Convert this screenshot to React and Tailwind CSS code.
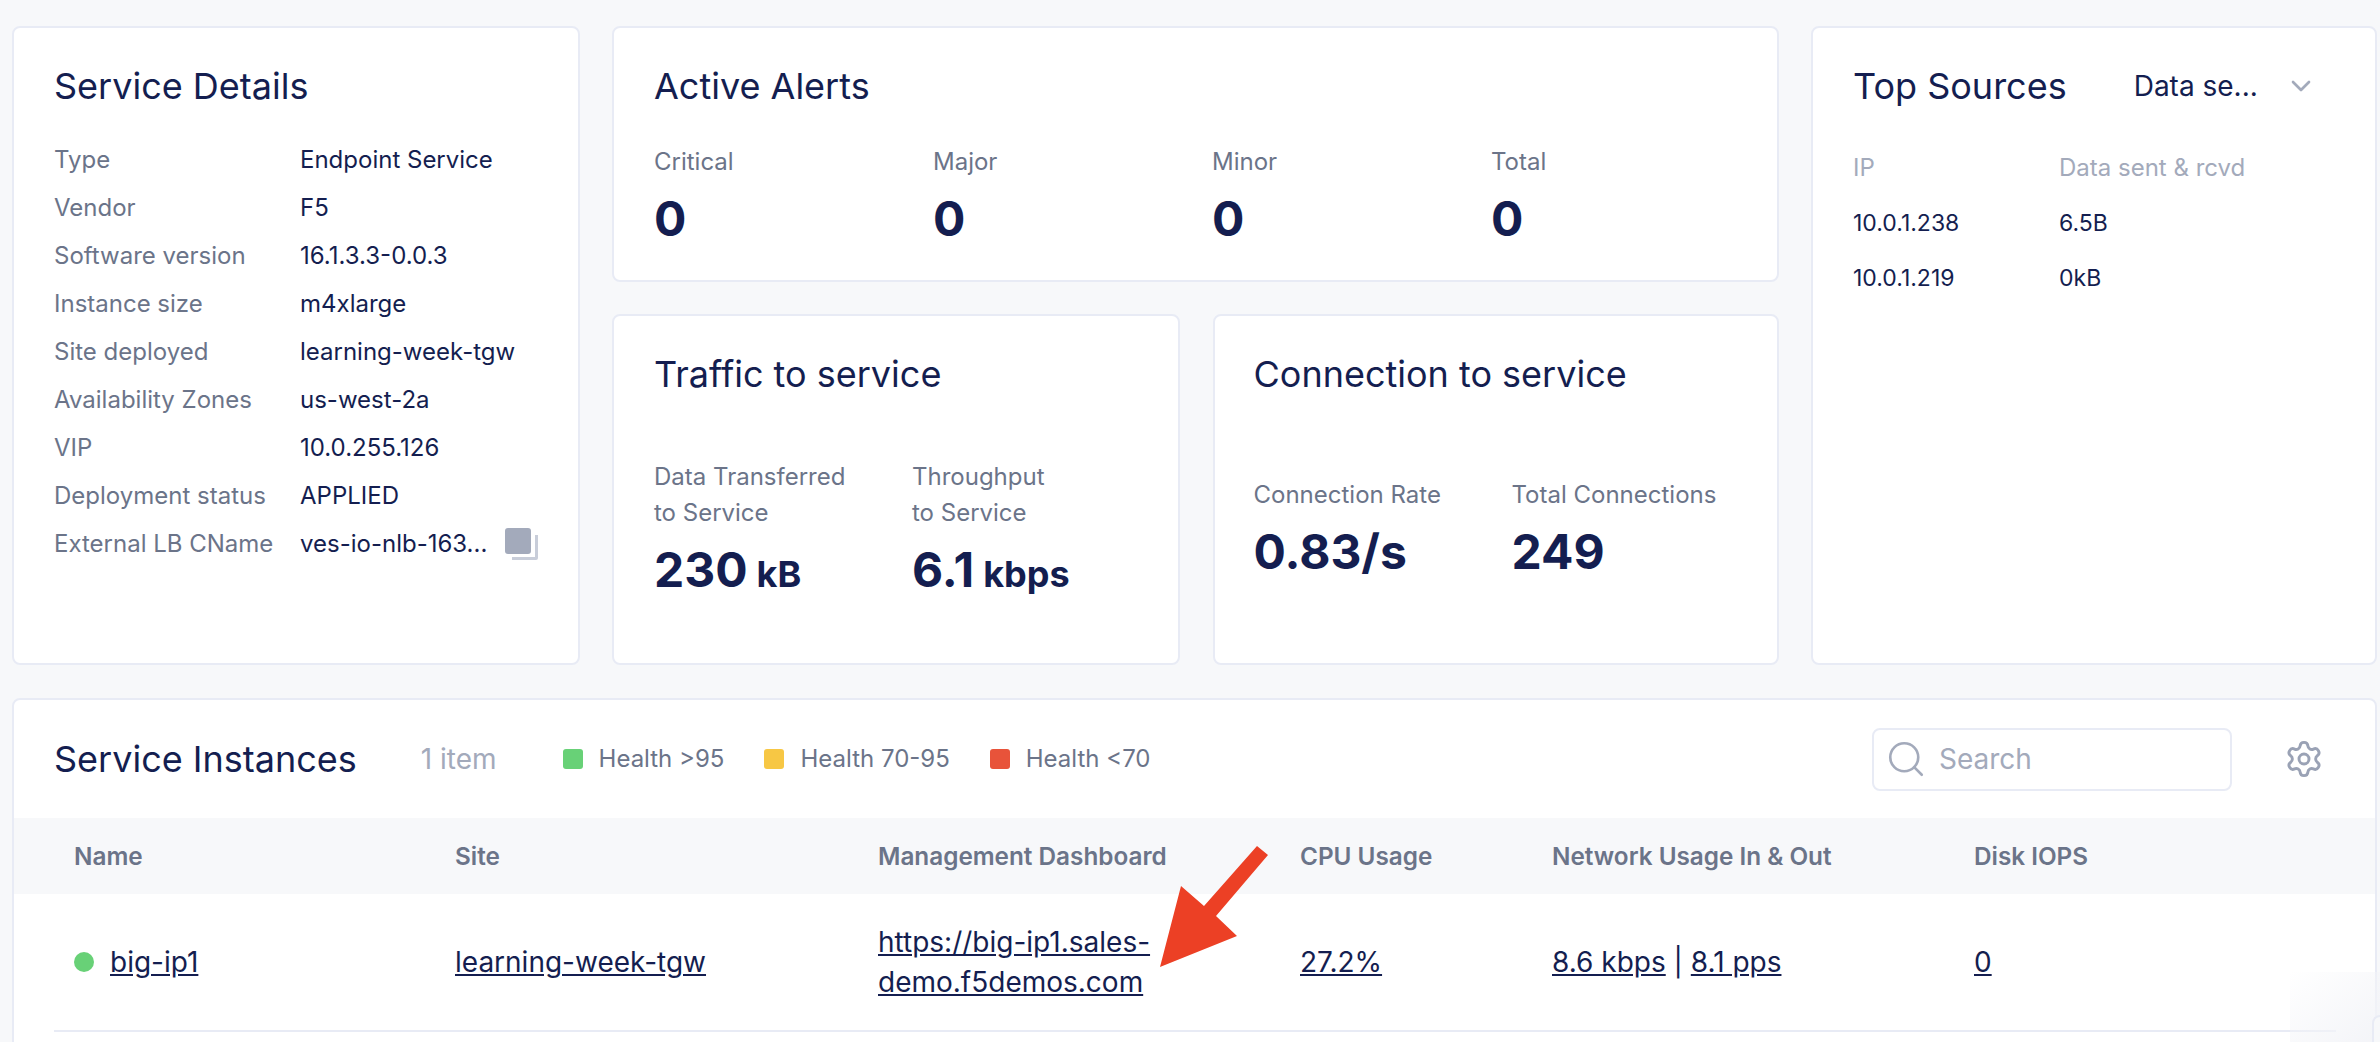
import React from 'react';
import { ChevronDown, Search, Settings } from 'lucide-react';

const details = [
  ['Type', 'Endpoint Service'],
  ['Vendor', 'F5'],
  ['Software version', '16.1.3.3-0.0.3'],
  ['Instance size', 'm4xlarge'],
  ['Site deployed', 'learning-week-tgw'],
  ['Availability Zones', 'us-west-2a'],
  ['VIP', '10.0.255.126'],
  ['Deployment status', 'APPLIED'],
];

const alerts = ['Critical', 'Major', 'Minor', 'Total'];

const Card = ({ className = '', children }) => (
  <div className={`bg-white rounded-lg border-2 border-[#e8ebf5] ${className}`}>{children}</div>
);

const Title = ({ children }) => (
  <h2 className="text-[36px] leading-[44px] font-normal text-[#141e50]">{children}</h2>
);

const Stat = ({ label, value, unit, className = '' }) => (
  <div className={className}>
    <div className="text-[24px] leading-[36px] text-[#6b7489]">{label}</div>
    <div className="mt-[9px] text-[48px] leading-[60px] font-bold text-[#141e50]">
      {value}
      {unit && <span className="ml-[9px] text-[36px] font-bold">{unit}</span>}
    </div>
  </div>
);

const Swatch = ({ color, label }) => (
  <div className="flex items-center gap-[16px] text-[24px] text-[#6b7489]">
    <span className={`w-[20px] h-[20px] rounded-[3px] ${color}`} />
    {label}
  </div>
);

const Link = ({ children }) => <a className="underline text-[#141e50]">{children}</a>;

export default function App() {
  return (
    <div className="relative h-[1042px] overflow-hidden bg-[#f7f8fa] pt-[26px] pl-3 pr-[3px] font-['Inter',sans-serif]">
      <div className="flex gap-[32px] h-[639px]">
        {/* Service Details */}
        <Card className="w-[568px] shrink-0 pl-[40px] pt-[36px]">
          <Title>Service Details</Title>
          <div className="mt-[28px] text-[24px]">
            {details.map(([k, v]) => (
              <div key={k} className="flex h-[48px] items-center">
                <div className="w-[246px] text-[#6b7489]">{k}</div>
                <div className="text-[#141e50]">{v}</div>
              </div>
            ))}
            <div className="flex h-[48px] items-center">
              <div className="w-[246px] text-[#6b7489]">External LB CName</div>
              <div className="text-[#141e50]">ves-io-nlb-163...</div>
              <svg width="33" height="32" viewBox="0 0 33 32" className="ml-[18px]">
                <path d="M30 7h3v23a2 2 0 0 1-2 2H7v-3h23z" fill="#c8cdd9" />
                <rect x="0" y="0" width="26" height="26" rx="3" fill="#a3aabb" />
              </svg>
            </div>
          </div>
        </Card>

        <div className="w-[1167px] shrink-0 flex flex-col gap-[32px]">
          {/* Active Alerts */}
          <Card className="h-[256px] pl-[40px] pt-[36px]">
            <Title>Active Alerts</Title>
            <div className="mt-[36px] grid grid-cols-4 w-[1116px]">
              {alerts.map((a) => (
                <Stat key={a} label={a} value="0" className="pb-0" />
              ))}
            </div>
          </Card>
          <div className="flex-1 flex gap-[33px]">
            <Card className="flex-1 pl-[40px] pt-[36px] flex flex-col">
              <Title>Traffic to service</Title>
              <div className="mt-[63px] flex">
                <Stat className="w-[258px]" label={<>Data Transferred<br />to Service</>} value="230" unit="kB" />
                <Stat label={<>Throughput<br />to Service</>} value="6.1" unit="kbps" />
              </div>
            </Card>
            <Card className="flex-1 pl-[39px] pt-[36px] flex flex-col">
              <Title>Connection to service</Title>
              <div className="mt-[81px] flex">
                <Stat className="w-[258px]" label="Connection Rate" value="0.83/s" />
                <Stat label="Total Connections" value="249" />
              </div>
            </Card>
          </div>
        </div>

        {/* Top Sources */}
        <Card className="flex-1 pl-[40px] pt-[36px]">
          <div className="flex items-center">
            <Title>Top Sources</Title>
            <span className="ml-[67px] text-[28px] text-[#141e50]">Data se...</span>
            <ChevronDown className="ml-[27px] w-[32px] h-[32px] text-[#a3aabb]" strokeWidth={2} />
          </div>
          <div className="mt-[33px] grid grid-cols-[206px_1fr] text-[24px] leading-[54px] text-[#141e50]">
            <span className="text-[#a3aabb]">IP</span>
            <span className="text-[#a3aabb]">Data sent &amp; rcvd</span>
            <span className="pt-[1px] text-[23px]">10.0.1.238</span>
            <span className="pt-[1px] text-[23px]">6.5B</span>
            <span className="pt-[1px] text-[23px]">10.0.1.219</span>
            <span className="pt-[1px] text-[23px]">0kB</span>
          </div>
        </Card>
      </div>

      {/* Service Instances */}
      <Card className="mt-[33px] h-[400px] rounded-b-none">
        <div className="h-[118px] flex items-center pl-[40px] pr-[51px]">
          <Title>Service Instances</Title>
          <span className="ml-[64px] text-[28px] text-[#a3aabb]">1 item</span>
          <div className="ml-[66px] flex gap-[40px]">
            <Swatch color="bg-[#68d177]" label="Health >95" />
            <Swatch color="bg-[#f7c744]" label="Health 70-95" />
            <Swatch color="bg-[#e8533a]" label="Health <70" />
          </div>
          <div className="ml-auto flex items-center gap-[52px]">
            <div className="w-[360px] h-[63px] rounded-lg border-2 border-[#e8ebf5] flex items-center pl-[11px] gap-[12px] text-[28px] text-[#a3aabb]">
              <Search className="w-[42px] h-[42px]" strokeWidth={1.5} />
              Search
            </div>
            <Settings className="w-[40px] h-[40px] text-[#9aa2b5]" strokeWidth={1.75} />
          </div>
        </div>
        <div className="h-[76px] bg-[#f7f8fa] flex items-center pl-[60px] text-[24.3px] font-semibold text-[#6b7489]">
          <div className="w-[381px]">Name</div>
          <div className="w-[423px]">Site</div>
          <div className="w-[422px]">Management Dashboard</div>
          <div className="w-[252px]">CPU Usage</div>
          <div className="w-[422px]">Network Usage In &amp; Out</div>
          <div>Disk IOPS</div>
        </div>
        <div className="ml-[40px] mr-[39px] h-[138px] pl-[20px] flex items-center border-b-2 border-[#e8ebf5] text-[28px] text-[#141e50]">
          <div className="w-[381px] flex items-center gap-[16px]">
            <span className="w-[20px] h-[20px] rounded-full bg-[#68d177]" />
            <Link>big-ip1</Link>
          </div>
          <div className="w-[423px]"><Link>learning-week-tgw</Link></div>
          <div className="w-[422px] leading-[40px]"><Link>https://big-ip1.sales-<br />demo.f5demos.com</Link></div>
          <div className="w-[252px]"><Link>27.2%</Link></div>
          <div className="w-[422px]"><Link>8.6 kbps</Link> | <Link>8.1 pps</Link></div>
          <div><Link>0</Link></div>
        </div>
      </Card>

      {/* annotation arrow */}
      <svg className="absolute left-[1150px] top-[840px]" width="130" height="135" viewBox="1150 840 130 135">
        <polygon points="1160,967 1181,886 1204,906 1257,846 1268,855 1216,916 1237,936" fill="#ec4025" />
      </svg>

      {/* faded window corner, bottom right */}
      <div className="absolute right-0 bottom-0 w-[90px] h-[70px] bg-linear-to-tl from-[#f3f4f8] to-transparent" />
      <div className="absolute right-0 bottom-0 w-[8px] h-[27px] bg-[#f7f8fa] border-l-2 border-t-2 border-[#e8ebf5] rounded-tl-lg" />
    </div>
  );
}
